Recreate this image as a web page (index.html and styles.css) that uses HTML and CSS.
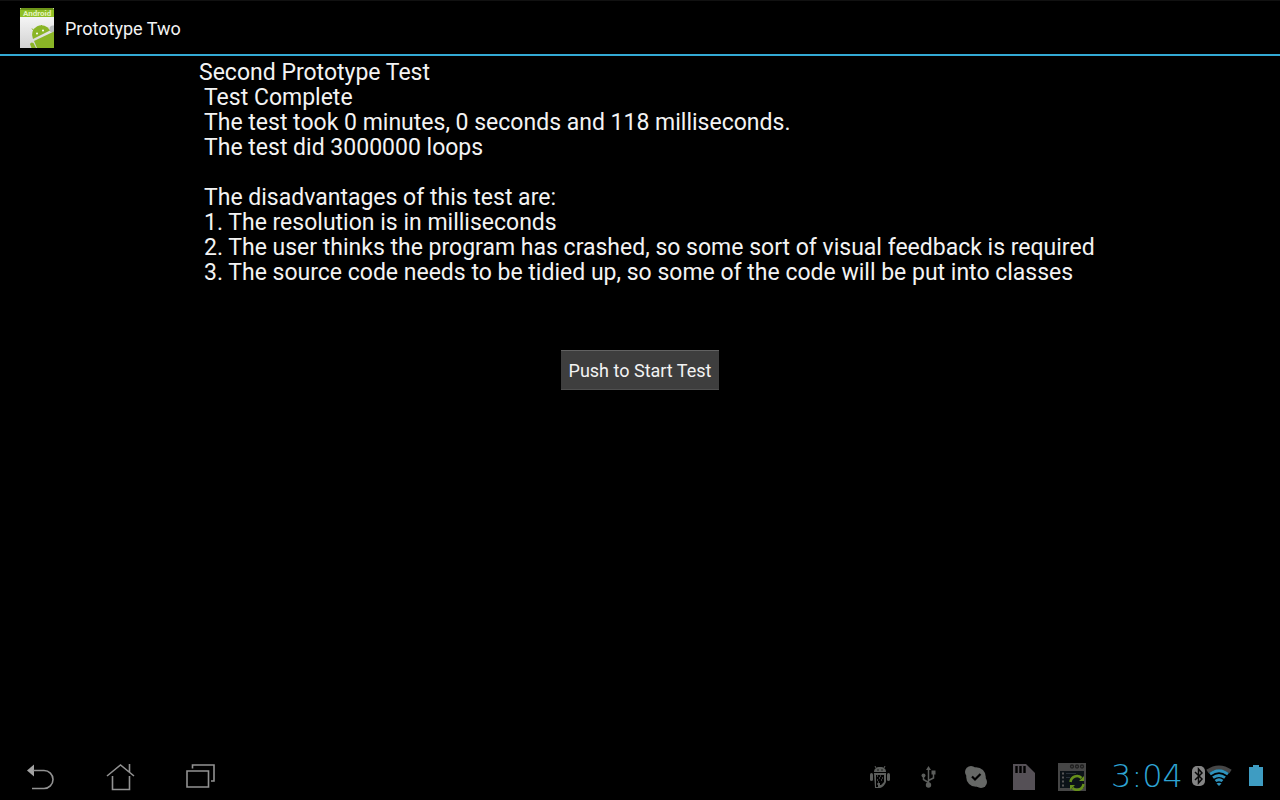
FILE: index.html
```html
<!DOCTYPE html>
<html lang="en">
<head>
<meta charset="utf-8">
<meta name="viewport" content="width=device-width, initial-scale=1">
<title>Prototype Two</title>
<link rel="stylesheet" href="styles.css">
</head>
<body>
<header class="action-bar">
  <svg class="app-icon" viewBox="0 0 34 40" aria-hidden="true">
    <defs>
      <linearGradient id="paper" x1="0" y1="0" x2="0" y2="1"><stop offset="0" stop-color="#fff"/><stop offset="1" stop-color="#d2d2d2"/></linearGradient>
      <clipPath id="page"><rect width="34" height="40"/></clipPath>
    </defs>
    <g clip-path="url(#page)">
      <rect width="34" height="40" fill="url(#paper)"/>
      <path d="M1 0h32l1 2v7H0V2z" fill="#8fbf25"/>
      <path d="M1 0h32l1 2H0z" fill="#6d9519"/>
      <text class="icon-label" x="3" y="8">Android</text>
      <circle cx="33" cy="21" r="3.5" fill="#b9bdbd"/>
      <g fill="#8ab526">
        <path d="M13 31A9.500 9.500 0 0 1 30 22.500z"/>
        <path d="M14 33L34 23.500v16.500H17z"/>
        <path d="M10 36q1-2.500 3.500-1L16 40h-4.500z"/>
      </g>
      <path d="M14 23l-2-2.500M21.500 20v-3" stroke="#8ab526" fill="none"/>
      <circle cx="17" cy="25.500" r="1" fill="#fff"/><circle cx="23" cy="22.500" r="1" fill="#fff"/>
    </g>
  </svg>
  <h1 class="app-title">Prototype Two</h1>
</header>
<main class="content">
  <section class="report">
    <p class="heading">Second Prototype Test</p>
    <div class="details">
      <p>Test Complete</p>
      <p>The test took 0 minutes, 0 seconds and 118 milliseconds.</p>
      <p>The test did 3000000 loops</p>
      <p class="list-title">The disadvantages of this test are:</p>
      <p>1. The resolution is in milliseconds</p>
      <p>2. The user thinks the program has crashed, so some sort of visual feedback is required</p>
      <p>3. The source code needs to be tidied up, so some of the code will be put into classes</p>
    </div>
  </section>
  <button class="start" type="button">Push to Start Test</button>
</main>
<footer class="system-bar">
  <nav class="nav-keys">
    <button class="key" type="button" aria-label="Back">
      <svg width="30" height="30" viewBox="0 0 30 30"><path d="M2 9.500l7-6v12z" fill="#a2a2a2"/><path d="M8 9.500h11a9 9 0 0 1 0 18H7" fill="none" stroke="#929292" stroke-width="1.600"/></svg>
    </button>
    <button class="key" type="button" aria-label="Home">
      <svg width="30" height="30" viewBox="0 0 30 30" fill="none" stroke="#929292" stroke-width="1.600"><path d="M2 15L15.500 4l13.500 11M24.500 11V3M7.500 15v13.500h17V15"/></svg>
    </button>
    <button class="key" type="button" aria-label="Recent apps">
      <svg width="30" height="30" viewBox="0 0 30 30" fill="none" stroke="#929292" stroke-width="1.600"><path d="M2 10h21.500v16H2zM7.500 7.500V4H29v16h-3"/></svg>
    </button>
  </nav>
  <div class="status">
    <div class="notices">
      <svg width="28" height="28" viewBox="0 0 28 28" aria-hidden="true">
        <g fill="#5c5e5c"><path d="M8 9c0-3 2-5 6-5s6 2 6 5z"/><path d="M10 5L9 3M18 5l1-2" stroke="#5c5e5c"/><rect x="4" y="10" width="3" height="8" rx="1.500"/><rect x="21" y="10" width="3" height="8" rx="1.500"/><path d="M8 10h12v9q-2 5-6 6H9z"/></g>
        <g fill="#000"><circle cx="12" cy="7" r=".7"/><circle cx="16" cy="7" r=".7"/><path d="M10 12h8v7l-3 3h-1v-2h-2v4h-2z"/></g>
        <path d="M11 13h1m2 0h1m-2 2h1m2 0h1m-6 2h1m3 0h1m-4 2h1m-2 2h1" stroke="#777"/>
      </svg>
      <svg width="28" height="28" viewBox="0 0 28 28" fill="none" stroke="#5c5e5c" stroke-width="1.500" aria-hidden="true">
        <path d="M14.500 6v17M14.500 19.500l-5-3v-4M14.500 17.500l5-2.500v-4"/><g fill="#5c5e5c" stroke="none"><path d="M14.500 3l2.500 4h-5z"/><circle cx="14.500" cy="22" r="2.700"/><circle cx="9.500" cy="12.500" r="2"/><path d="M17.500 7.500h4v4h-4z"/></g>
      </svg>
      <svg width="28" height="28" viewBox="0 0 28 28" aria-hidden="true">
        <g fill="#666866"><circle cx="14" cy="14" r="9.800"/><circle cx="9" cy="9" r="6"/><circle cx="19" cy="19" r="6"/></g><path d="M10 13.500l3 3 5.500-5.500" fill="none" stroke="#000" stroke-width="2.200"/>
      </svg>
      <svg width="28" height="28" viewBox="0 0 28 28" aria-hidden="true">
        <path d="M3 1h13l9 9v17H3z" fill="#555056"/><path d="M6.500 3v7m4-7v7m4-7v7" stroke="#000" stroke-width="2.400"/>
      </svg>
      <svg width="28" height="28" viewBox="0 0 28 28" aria-hidden="true">
        <path d="M0 0h28v28H0z" fill="#464646"/><path d="M2 8h24v17H2z" fill="#0c1318"/>
        <g fill="none" stroke="#202020" stroke-width="1.300"><circle cx="14" cy="3.500" r="1.500"/><circle cx="19" cy="3.500" r="1.500"/><circle cx="24" cy="3.500" r="1.500"/></g>
        <path d="M4 10.500h2m-2 4h2m-2 4h2m-2 4h2" stroke="#565656" stroke-width="2"/><path d="M8 10.500h10m-10 4h4" stroke="#29313a"/>
        <g fill="none" stroke="#66901b" stroke-width="2.500"><path d="M12.500 19a6.500 6.500 0 0 1 11-4M25.500 21a6.500 6.500 0 0 1-11 4"/></g><path d="M21 18h5v-5zM17 22h-5v5z" fill="#66901b"/>
      </svg>
    </div>
    <time class="clock" datetime="15:04">3:04</time>
    <svg width="14" height="22" viewBox="0 0 14 22" role="img" aria-label="Bluetooth"><rect y="1" width="13" height="20" rx="5" fill="#858585"/><path d="M3 7l7 7-3.500 4V4L10 8l-7 7" fill="none" stroke="#080808" stroke-width="1.500"/></svg>
    <svg class="wifi" width="26" height="22" viewBox="0 0 26 22" role="img" aria-label="Wi-Fi">
      <path d="M1.500 6.500q11.500-8 23 0" fill="none" stroke="#464646" stroke-width="4"/>
      <g fill="none" stroke="#2e93bd" stroke-width="2.800"><path d="M4 9.200q9-7 18 0M7 12.700q6-4.500 12 0M9.500 16q3.500-2.600 7 0"/></g><path d="M10.500 18.500q2.500-1.500 5 0L13 21z" fill="#2e93bd"/>
    </svg>
    <svg width="14" height="22" viewBox="0 0 14 22" role="img" aria-label="Battery"><path d="M0 2h4V0h6v2h4v19H0z" fill="#3e9cc2"/></svg>
  </div>
</footer>
</body>
</html>
```
FILE: styles.css
```css
* { box-sizing: border-box; }
body {
  margin: 0;
  min-height: 100vh;
  display: flex;
  flex-direction: column;
  background: #000;
  color: #f3f3f3;
  font-family: Roboto, sans-serif;
}
p, h1 { margin: 0; }
svg { display: block; flex: none; }
.action-bar {
  display: flex;
  align-items: center;
  gap: 11px;
  height: 56px;
  padding: 0 20px;
  border-top: 1px solid #111;
  border-bottom: 2px solid #33a9d4;
}
.app-icon { width: 34px; height: 40px; }
.icon-label { font-size: 8px; font-weight: 700; fill: #e4f3bd; }
.app-title { padding-top: 2px; font-size: 18px; font-weight: 400; line-height: 24px; }
.content {
  flex: 1;
  display: flex;
  flex-direction: column;
  align-items: center;
  gap: 65px;
  padding-top: 4px;
}
.report {
  width: 100%;
  max-width: 920px;
  padding-left: 19px;
  font-size: 23px;
  line-height: 25px;
}
.details { padding-left: 5px; }
.list-title { margin-top: 25px; }
.start {
  padding: 9px 8px 7px;
  border: 0;
  border-top: 1px solid #626262;
  border-bottom: 1px solid #505050;
  background: #3e3e3e;
  color: #f3f3f3;
  font-family: inherit;
  font-size: 18px;
  line-height: 22px;
}
.system-bar {
  display: flex;
  justify-content: space-between;
  align-items: center;
  height: 48px;
  padding: 0 17px 0 25px;
}
.nav-keys { display: flex; gap: 50px; }
.key { padding: 0; border: 0; background: none; }
.status { display: flex; align-items: center; }
.notices { display: flex; gap: 20px; margin-right: 16px; padding-top: 1px; }
.clock {
  width: 90px;
  text-align: center;
  color: #2ea4d3;
  font: 200 32px/32px "DejaVu Sans", sans-serif;
}
.wifi { margin-right: 17px; }
```
